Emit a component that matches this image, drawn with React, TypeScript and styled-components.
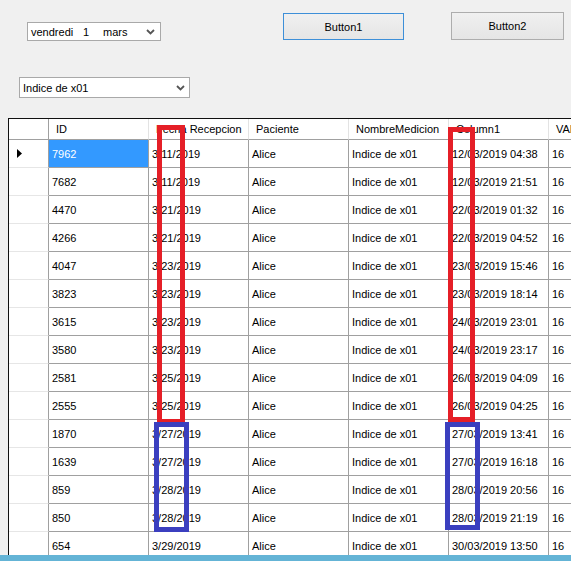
import React from "react";
import styled, { createGlobalStyle } from "styled-components";

const Global = createGlobalStyle`
  html, body { margin: 0; padding: 0; background: #f0f0f0; overflow: hidden; }
  body { font-family: "Liberation Sans", Arial, sans-serif; font-size: 11px; color: #000; }
`;

const Page = styled.div`
  width: 571px;
  height: 561px;
  display: flex;
  flex-direction: column;
  overflow: hidden;
  position: relative;
`;

const TopRow = styled.div`
  display: flex;
  align-items: flex-start;
  padding-top: 12px;
  height: 29px;
`;

const DatePicker = styled.div`
  margin-left: 27px;
  margin-top: 10px;
  width: 134px;
  height: 19px;
  border: 1px solid #a9a9a9;
  background: #fff;
  display: flex;
  align-items: center;
  padding-left: 3px;
  box-sizing: border-box;
  position: relative;
`;

const DateText = styled.span<{ $w?: number }>`
  display: inline-block;
  width: ${(p) => (p.$w ? `${p.$w}px` : "auto")};
  white-space: pre;
`;

const Chevron = styled.svg<{ $right: number }>`
  position: absolute;
  right: ${(p) => p.$right}px;
  top: 50%;
  margin-top: -3px;
`;

const Button = styled.div<{ $focused?: boolean; $ml: number; $mt: number; $w: number; $h: number }>`
  margin-left: ${(p) => p.$ml}px;
  margin-top: ${(p) => p.$mt}px;
  width: ${(p) => p.$w}px;
  height: ${(p) => p.$h}px;
  box-sizing: border-box;
  border: 1px solid ${(p) => (p.$focused ? "#3d8fd8" : "#adadad")};
  background: linear-gradient(#f0f0f0, #e5e5e5);
  display: flex;
  align-items: center;
  justify-content: center;
  font-size: 11px;
`;

const ComboRow = styled.div`
  margin-top: 36px;
  margin-left: 19px;
  height: 20px;
  display: flex;
`;

const Combo = styled.div`
  width: 171px;
  height: 21px;
  border: 1px solid #a9a9a9;
  background: #fff;
  display: flex;
  align-items: center;
  padding-left: 3px;
  box-sizing: border-box;
  position: relative;
`;

const GridWrap = styled.div`
  margin-top: 21px;
  margin-left: 8px;
  height: 437px;
  overflow: hidden;
  position: relative;
  border-left: 1px solid #101010;
  border-top: 1px solid #101010;
  background: #fff;
`;

const Grid = styled.div`
  display: grid;
  grid-template-columns: 40px repeat(6, 100px);
  width: 640px;
`;

const HeaderCell = styled.div<{ $corner?: boolean }>`
  height: 20px;
  box-sizing: content-box;
  border-bottom: 1px solid #a0a0a0;
  border-right: 1px solid ${(p) => (p.$corner ? "#a0a0a0" : "#e3e3e3")};
  display: flex;
  align-items: center;
  padding-left: 7px;
  white-space: nowrap;
  overflow: hidden;
  background: #fff;
`;

const RowHeader = styled.div`
  height: 27px;
  border-bottom: 1px solid #e6e6e6;
  border-right: 1px solid #a0a0a0;
  display: flex;
  align-items: center;
  padding-left: 8px;
  background: #fff;
`;

const Cell = styled.div<{ $selected?: boolean }>`
  height: 27px;
  border-bottom: 1px solid #a0a0a0;
  border-right: 1px solid #a0a0a0;
  display: flex;
  align-items: center;
  padding-left: 3px;
  white-space: nowrap;
  overflow: hidden;
  background: ${(p) => (p.$selected ? "#3399ff" : "#fff")};
  color: ${(p) => (p.$selected ? "#fff" : "#000")};
`;

const Mark = styled.div<{ $color: string }>`
  position: absolute;
  box-sizing: border-box;
  border: 5px solid ${(p) => p.$color};
  pointer-events: none;
`;

const BottomBar = styled.div`
  height: 6px;
  background: #64b4d6;
  flex-shrink: 0;
`;

const ChevronIcon = ({ right }: { right: number }) => (
  <Chevron $right={right} width="9" height="6" viewBox="0 0 9 6">
    <path d="M1 1 L4.5 4.5 L8 1" fill="none" stroke="#555" strokeWidth="1.8" />
  </Chevron>
);

const rows: [string, string, string, string, string, string][] = [
  ["7962", "3/11/2019", "Alice", "Indice de x01", "12/03/2019 04:38", "16"],
  ["7682", "3/11/2019", "Alice", "Indice de x01", "12/03/2019 21:51", "16"],
  ["4470", "3/21/2019", "Alice", "Indice de x01", "22/03/2019 01:32", "16"],
  ["4266", "3/21/2019", "Alice", "Indice de x01", "22/03/2019 04:52", "16"],
  ["4047", "3/23/2019", "Alice", "Indice de x01", "23/03/2019 15:46", "16"],
  ["3823", "3/23/2019", "Alice", "Indice de x01", "23/03/2019 18:14", "16"],
  ["3615", "3/23/2019", "Alice", "Indice de x01", "24/03/2019 23:01", "16"],
  ["3580", "3/23/2019", "Alice", "Indice de x01", "24/03/2019 23:17", "16"],
  ["2581", "3/25/2019", "Alice", "Indice de x01", "26/03/2019 04:09", "16"],
  ["2555", "3/25/2019", "Alice", "Indice de x01", "26/03/2019 04:25", "16"],
  ["1870", "3/27/2019", "Alice", "Indice de x01", "27/03/2019 13:41", "16"],
  ["1639", "3/27/2019", "Alice", "Indice de x01", "27/03/2019 16:18", "16"],
  ["859", "3/28/2019", "Alice", "Indice de x01", "28/03/2019 20:56", "16"],
  ["850", "3/28/2019", "Alice", "Indice de x01", "28/03/2019 21:19", "16"],
  ["654", "3/29/2019", "Alice", "Indice de x01", "30/03/2019 13:50", "16"],
];

const headers = ["ID", "Fecha Recepcion", "Paciente", "NombreMedicion", "Column1", "VALOR"];

// mark positions relative to GridWrap content (page x - 9, page y - 119)
const marks = [
  { color: "#e51f27", left: 148, top: 6, width: 28, height: 299 },
  { color: "#e51f27", left: 439, top: 8, width: 27, height: 295 },
  { color: "#3b3fbf", left: 145, top: 303, width: 35, height: 110 },
  { color: "#3b3fbf", left: 436, top: 303, width: 35, height: 108 },
];

export default function App() {
  return (
    <>
      <Global />
      <Page>
        <TopRow>
          <DatePicker>
            <DateText $w={52}>vendredi</DateText>
            <DateText $w={20}>1</DateText>
            <DateText>mars</DateText>
            <ChevronIcon right={5} />
          </DatePicker>
          <Button $focused $ml={122} $mt={1} $w={121} $h={27}>
            Button1
          </Button>
          <Button $ml={47} $mt={0} $w={113} $h={28}>
            Button2
          </Button>
        </TopRow>
        <ComboRow>
          <Combo>
            Indice de x01
            <ChevronIcon right={4} />
          </Combo>
        </ComboRow>
        <GridWrap>
          <Grid>
            <HeaderCell $corner />
            {headers.map((h) => (
              <HeaderCell key={h}>{h}</HeaderCell>
            ))}
            {rows.map((r, i) => (
              <React.Fragment key={r[0]}>
                <RowHeader>
                  {i === 0 && (
                    <svg width="5" height="9" viewBox="0 0 5 9">
                      <path d="M0 0 L5 4.5 L0 9 Z" fill="#000" />
                    </svg>
                  )}
                </RowHeader>
                {r.map((c, j) => (
                  <Cell key={j} $selected={i === 0 && j === 0}>
                    {c}
                  </Cell>
                ))}
              </React.Fragment>
            ))}
          </Grid>
          {marks.map((m, i) => (
            <Mark
              key={i}
              $color={m.color}
              style={{ left: m.left, top: m.top, width: m.width, height: m.height }}
            />
          ))}
        </GridWrap>
        <BottomBar />
      </Page>
    </>
  );
}
